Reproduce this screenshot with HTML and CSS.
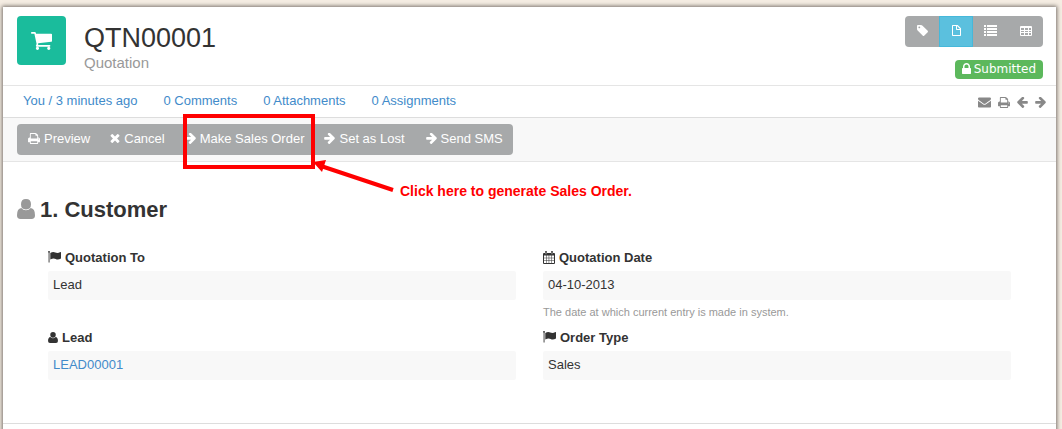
FILE: index.html
```html
<!DOCTYPE html>
<html lang="en">
<head>
<meta charset="utf-8">
<title>QTN00001 - Quotation</title>
<link rel="stylesheet" href="styles.css">
</head>
<body>
<svg class="sprite" aria-hidden="true">
  <symbol id="cart" viewBox="64 256 1664 1408"><path d="M704 1536q0 52-38 90t-90 38-90-38-38-90 38-90 90-38 90 38 38 90zm896 0q0 52-38 90t-90 38-90-38-38-90 38-90 90-38 90 38 38 90zm128-1088v512q0 24-16.500 42.500t-40.500 21.500l-1044 122q13 60 13 70 0 16-24 64h920q26 0 45 19t19 45-19 45-45 19h-1024q-26 0-45-19t-19-45q0-11 8-31.500t16-36 21.500-40 15.500-29.500l-177-823h-204q-26 0-45-19t-19-45 19-45 45-19h256q16 0 28.500 6.500t19.500 15.500 13 24.500 8 26 5.500 29.500 4.500 26h1201q26 0 45 19t19 45z"/></symbol>
  <symbol id="right" viewBox="128 232 1472 1520"><path d="M1600 960q0 54-37 91l-651 651q-39 37-91 37-51 0-90-37l-75-75q-38-38-38-91t38-91l293-293h-704q-52 0-84.500-37.500t-32.500-90.500v-128q0-53 32.500-90.500t84.500-37.500h704l-293-294q-38-36-38-90t38-90l75-75q38-38 90-38 53 0 91 38l651 651q37 35 37 90z"/></symbol>
  <symbol id="user" viewBox="0 0 18 20"><path d="M9 0Q14 0 14 5.200T9 10.400T4 5.200T9 0ZM4.300 9Q6 11.200 9 11.200T13.700 9Q18 9.500 18 16.200Q18 20 14.500 20H3.500Q0 20 0 16.200Q0 9.500 4.300 9Z"/></symbol>
  <symbol id="times" viewBox="302 366 1188 1188"><path d="M1490 1322q0 40-28 68l-136 136q-28 28-68 28t-68-28l-294-294-294 294q-28 28-68 28t-68-28l-136-136q-28-28-28-68t28-68l294-294-294-294q-28-28-28-68t28-68l136-136q28-28 68-28t68 28l294 294 294-294q28-28 68-28t68 28l136 136q28 28 28 68t-28 68l-294 294 294 294q28 28 28 68z"/></symbol>
  <symbol id="print" viewBox="64 128 1664 1536"><path d="M448 1536h896v-256h-896v256zm0-640h896v-384h-160q-40 0-68-28t-28-68v-160h-640v640zm1152 64q0-26-19-45t-45-19-45 19-19 45 19 45 45 19 45-19 19-45zm128 0v416q0 13-9.500 22.500t-22.500 9.500h-224v160q0 40-28 68t-68 28h-960q-40 0-68-28t-28-68v-160h-224q-13 0-22.500-9.500t-9.500-22.500v-416q0-79 56.500-135.500t135.500-56.500h64v-544q0-40 28-68t68-28h672q40 0 88 20t76 48l152 152q28 28 48 76t20 88v256h64q79 0 135.500 56.500t56.500 135.500z"/></symbol>
  <symbol id="mail" viewBox="0 256 1792 1408"><path d="M1792 710v794q0 66-47 113t-113 47h-1472q-66 0-113-47t-47-113v-794q44 49 101 87 362 246 497 345 57 42 92.500 65.500t94.500 48 110 24.500h2q51 0 110-24.500t94.500-48 92.500-65.500q170-123 498-345 57-39 100-87zm0-294q0 79-49 151t-122 123q-376 261-468 325-10 7-42.500 31t-54 38.500-52 32.500-57.500 27-50 9h-2q-23 0-50-9t-57.500-27-52-32.500-54-38.500-42.500-31q-91-64-262-182.500t-205-142.500q-62-42-117-115.500t-55-136.500q0-78 41.500-130t118.500-52h1472q65 0 112.500 47t47.500 113z"/></symbol>
  <symbol id="lock" viewBox="320 128 1152 1408"><path d="M640 768h512v-192q0-106-75-181t-181-75-181 75-75 181v192zm832 96v576q0 40-28 68t-68 28h-960q-40 0-68-28t-28-68v-576q0-40 28-68t68-28h32v-192q0-184 132-316t316-132 316 132 132 316v192h32q40 0 68 28t28 68z"/></symbol>
  <symbol id="tag" viewBox="128 128 1520 1520"><path d="M576 448q0-53-37.500-90.500t-90.500-37.500-90.500 37.500-37.500 90.500 37.500 90.500 90.500 37.500 90.500-37.500 37.500-90.500zm1067 576q0 53-37 90l-491 492q-39 37-91 37-53 0-90-37l-715-716q-38-37-64.500-101t-26.500-117v-416q0-52 38-90t90-38h416q53 0 117 26.500t102 64.500l715 714q37 39 37 91z"/></symbol>
  <symbol id="file" viewBox="0 0 9 11"><path fill-rule="evenodd" d="M.7 0H5.700L9 3.300V10.300Q9 11 8.300 11H.7Q0 11 0 10.300V.7Q0 0 .7 0ZM1 1V10H8V5H4.700Q4 5 4 4.300V1ZM5 1V4H8Z"/></symbol>
  <symbol id="list" viewBox="0 0 13 11"><path d="M0 0h2v2H0zM3 0h10v2H3zM0 3h2v2H0zM3 3h10v2H3zM0 6h2v2H0zM3 6h10v2H3zM0 9h2v2H0zM3 9h10v2H3z"/></symbol>
  <symbol id="table" viewBox="0 0 12 10"><path fill-rule="evenodd" d="M1 0h10q1 0 1 1v8q0 1-1 1H1q-1 0-1-1V1q0-1 1-1ZM1 2V4H4V2ZM5 2V4H8V2ZM9 2V4H11V2ZM1 5V6H4V5ZM5 5V6H8V5ZM9 5V6H11V5ZM1 7V9H4V7ZM5 7V9H8V7ZM9 7V9H11V7Z"/></symbol>
  <symbol id="calendar" viewBox="0 0 12 13"><path fill-rule="evenodd" d="M1 2H2V1Q2 0 3 0T4 1V2H8V1Q8 0 9 0T10 1V2H11Q12 2 12 3V12Q12 13 11 13H1Q0 13 0 12V3Q0 2 1 2ZM1 4.600V6.700H3V4.600ZM3.500 4.600V6.700H5.700V4.600ZM6.200 4.600V6.700H8.500V4.600ZM9 4.600V6.700H11V4.600ZM1 7.200V9.400H3V7.200ZM3.500 7.200V9.400H5.700V7.200ZM6.200 7.200V9.400H8.500V7.200ZM9 7.200V9.400H11V7.200ZM1 9.900V12H3V9.900ZM3.500 9.900V12H5.700V9.900ZM6.200 9.900V12H8.500V9.900ZM9 9.900V12H11V9.900ZM2.700 1V3.300H3.300V1ZM8.700 1V3.300H9.300V1Z"/></symbol>
  <symbol id="flag" viewBox="0 0 13 12"><path d="M1 0Q2 0 2 1L1.500 1.800V11.500H.6V1.800L0 1Q0 0 1 0ZM2.300 2Q5 .3 7.300 1.500T12.400 1Q13 .8 13 1.400V7.400Q10 9.300 7.700 8T2.300 8.500Z"/></symbol>
</svg>
<main class="page">
  <header class="header">
    <div class="module"><svg class="icon-cart"><use href="#cart"/></svg></div>
    <div class="titles">
      <h1 class="title">QTN00001</h1>
      <div class="subtitle">Quotation</div>
    </div>
    <div class="status-area">
      <div class="views">
        <button class="view" aria-label="Tags"><svg class="icon-tag"><use href="#tag"/></svg></button>
        <button class="view active" aria-label="Form"><svg class="icon-file"><use href="#file"/></svg></button>
        <button class="view" aria-label="List"><svg class="icon-list"><use href="#list"/></svg></button>
        <button class="view" aria-label="Report"><svg class="icon-table"><use href="#table"/></svg></button>
      </div>
      <span class="badge"><svg class="icon-lock"><use href="#lock"/></svg>Submitted</span>
    </div>
  </header>
  <nav class="info">
    <a href="#">You / 3 minutes ago</a>
    <a href="#">0 Comments</a>
    <a href="#">0 Attachments</a>
    <a href="#">0 Assignments</a>
    <div class="tools">
      <button class="tool" aria-label="Email"><svg class="icon-mail"><use href="#mail"/></svg></button>
      <button class="tool" aria-label="Print"><svg class="icon-print"><use href="#print"/></svg></button>
      <button class="tool" aria-label="Previous"><svg class="icon-arrow back"><use href="#right"/></svg></button>
      <button class="tool" aria-label="Next"><svg class="icon-arrow"><use href="#right"/></svg></button>
    </div>
  </nav>
  <div class="toolbar">
    <div class="actions">
      <button class="action"><svg class="icon-print"><use href="#print"/></svg>Preview</button>
      <button class="action"><svg class="icon-times"><use href="#times"/></svg>Cancel</button>
      <button class="action"><svg class="icon-arrow"><use href="#right"/></svg>Make Sales Order</button>
      <button class="action"><svg class="icon-arrow"><use href="#right"/></svg>Set as Lost</button>
      <button class="action"><svg class="icon-arrow"><use href="#right"/></svg>Send SMS</button>
    </div>
    <div class="callout-box"></div>
    <svg class="callout-arrow" viewBox="0 0 84 36"><path d="M8 6L80 30" stroke="#f00" stroke-width="4"/><path d="M0 2L13 0L9 12Z" fill="#f00"/></svg>
    <strong class="callout-text">Click here to generate Sales Order.</strong>
  </div>
  <section class="section">
    <h2 class="section-title"><svg class="icon-section"><use href="#user"/></svg>1. Customer</h2>
    <div class="fields">
      <div class="field">
        <div class="label"><svg class="icon-flag"><use href="#flag"/></svg>Quotation To</div>
        <div class="value">Lead</div>
      </div>
      <div class="field">
        <div class="label"><svg class="icon-calendar"><use href="#calendar"/></svg>Quotation Date</div>
        <div class="value">04-10-2013</div>
        <p class="help">The date at which current entry is made in system.</p>
      </div>
      <div class="field">
        <div class="label"><svg class="icon-user"><use href="#user"/></svg>Lead</div>
        <div class="value"><a href="#">LEAD00001</a></div>
      </div>
      <div class="field">
        <div class="label"><svg class="icon-flag"><use href="#flag"/></svg>Order Type</div>
        <div class="value">Sales</div>
      </div>
    </div>
  </section>
</main>
</body>
</html>
```

FILE: styles.css
```css
* { box-sizing: border-box; }
html { height: 100%; overflow: hidden; }
body {
  margin: 0;
  min-height: 100%;
  padding: 7px 6px 0 3px;
  background: #f5ede3;
  color: #333;
  font: 13px/18px "Liberation Sans", Arial, sans-serif;
  display: flex;
  overflow: hidden;
}
a { color: #428bca; text-decoration: none; }
button { font: inherit; border: 0; margin: 0; padding: 0; background: none; color: inherit; cursor: pointer; }
svg { fill: currentColor; flex: none; display: block; }
.sprite { position: absolute; width: 0; height: 0; }

.page { flex: 1; min-width: 0; min-height: 100vh; background: #fff; box-shadow: 0 0 4px 1px #77706a; }

.header { display: flex; padding: 9px 13px 6px 14px; border-bottom: 1px solid #e5e5e5; }
.module { width: 49px; height: 49px; border-radius: 4px; background: #1abc9c; color: #fff; display: flex; align-items: center; justify-content: center; }
.icon-cart { width: 21px; height: 18px; }
.titles { flex: 1; padding: 7px 0 0 18px; }
.title { margin: 0; font-size: 27px; line-height: 31px; font-weight: 400; }
.subtitle { font-size: 15px; line-height: 18px; color: #999; }
.status-area { display: flex; flex-direction: column; align-items: flex-end; gap: 13px; }
.views { display: flex; border-radius: 4px; overflow: hidden; background: #a7a9aa; }
.view { width: 35px; height: 31px; padding-bottom: 2px; color: #fff; display: flex; align-items: center; justify-content: center; }
.view:nth-child(-n+2) { width: 34px; }
.view.active { background: #5bc0de; box-shadow: inset 0 0 0 1px #46b8da; }
.icon-tag { width: 11px; height: 11px; }
.icon-file { width: 9px; height: 11px; }
.icon-list { width: 13px; height: 11px; }
.icon-table { width: 12px; height: 10px; }
.badge { display: flex; align-items: center; gap: 3px; padding: 0 7px; height: 19px; border-radius: 4px; background: #5cb85c; color: #fff; font: 12px/19px "DejaVu Sans", sans-serif; }
.icon-lock { width: 9px; height: 11px; margin-bottom: 2px; }

.info { display: flex; gap: 26px; padding: 6px 10px 7px 20px; border-bottom: 1px solid #ddd; }
.tools { margin-left: auto; display: flex; align-items: center; gap: 7px; color: #888; padding-top: 3px; }
.icon-mail { width: 13px; height: 11px; }
.icon-print { width: 12px; height: 11px; }
.icon-arrow { width: 11px; height: 11px; }
.back { transform: scaleX(-1); }

.toolbar { position: relative; padding: 6px 14px; background: #f8f8f8; border-bottom: 1px solid #e5e5e5; }
.actions { display: inline-flex; vertical-align: top; border-radius: 4px; background: #a7a9aa; color: #fff; }
.action { display: flex; align-items: center; gap: 4px; height: 31px; padding: 0 10px 2px; }
.action:first-child, .action:last-child { padding-left: 11px; }
.icon-times { width: 10px; height: 9px; }
.callout-box { position: absolute; left: 180px; top: -4px; width: 132px; height: 55px; border: 4px solid #f00; }
.callout-arrow { position: absolute; left: 310px; top: 42px; width: 84px; height: 36px; }
.callout-text { position: absolute; left: 397px; top: 64px; font-size: 14px; color: #f00; white-space: nowrap; }

.section { padding: 34px 14px 43px; border-bottom: 1px solid #ddd; }
.section-title { margin: 0; display: flex; align-items: center; gap: 5px; font-size: 22px; line-height: 28px; }
.icon-section { width: 18px; height: 20px; color: #999; margin-bottom: 2px; }
.fields { display: grid; grid-template-columns: 1fr 1fr; gap: 8px 27px; padding: 25px 31px 0; }
.label { display: flex; align-items: center; gap: 4px; font-weight: 700; margin-bottom: 4px; }
.label svg { margin-bottom: 2px; }
.value { padding: 5px 5px 6px; background: #f8f8f8; border-radius: 2px; }
.help { margin: 4px 0 1px; font-size: 11px; line-height: 16px; color: #999; }
.icon-flag { width: 13px; height: 12px; }
.icon-calendar { width: 12px; height: 13px; }
.icon-user { width: 10px; height: 11px; }
```
